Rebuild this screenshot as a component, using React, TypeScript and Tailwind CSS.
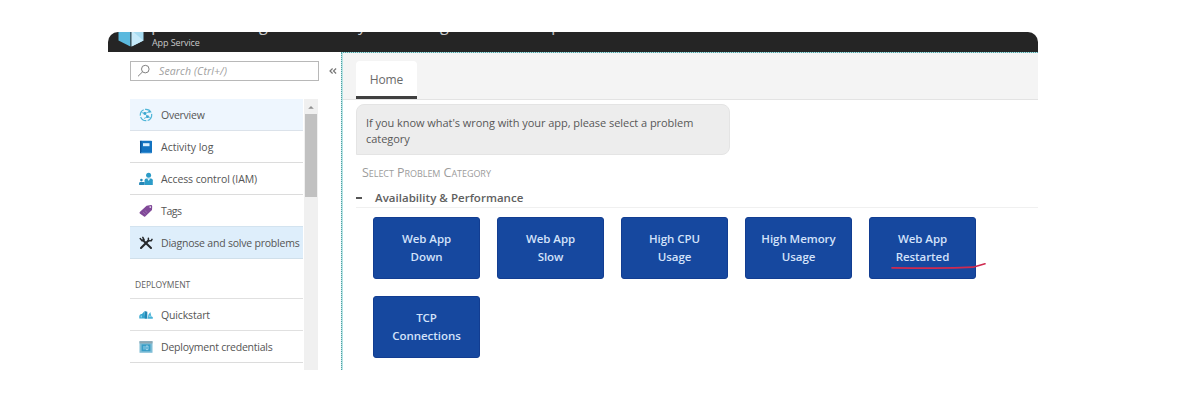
import React from "react";

type NavItem = {
  label: string;
  icon: React.ReactNode;
  row: string;
  text: string;
};

const OverviewIcon = () => (
  <svg width="14" height="14" viewBox="0 0 14 14" fill="none">
    <circle cx="7" cy="7" r="5.7" stroke="#4fb6d8" strokeWidth="1.2" strokeDasharray="7 1.4" />
    <path d="M2.5 4.5 6 5.5 8.4 8.8 11.5 9.5M6 5.5 10 3.8M8.4 8.8 5 10.5" stroke="#58b9d8" strokeWidth="0.9" />
    <circle cx="5.8" cy="5.5" r="1.4" fill="#3aa5cf" />
    <circle cx="8.5" cy="8.7" r="1.4" fill="#3aa5cf" />
    <circle cx="10.2" cy="3.8" r="0.9" fill="#3aa5cf" />
  </svg>
);

const LogIcon = () => (
  <svg width="14" height="14" viewBox="0 0 14 14">
    <rect x="1" y="0.8" width="12" height="12.4" rx="0.8" fill="#1272c0" />
    <rect x="1" y="0.8" width="1.4" height="12.4" fill="#0a5499" />
    <rect x="4" y="3.2" width="6.5" height="3" fill="#d9efff" />
    <rect x="2" y="12" width="10.6" height="0.8" fill="#3d91d3" />
  </svg>
);

const AccessIcon = () => (
  <svg width="14" height="14" viewBox="0 0 14 14">
    <circle cx="9.6" cy="3.2" r="2.5" fill="#2c9cc8" />
    <path d="M5.6 13V8.2Q5.6 6.4 7.2 6.4H12Q13.8 6.4 13.8 8.2V13Z" fill="#2c9cc8" />
    <path d="M8.2 6.4h3L9.7 9Z" fill="#e2f6ff" />
    <circle cx="2.4" cy="8.1" r="1.3" fill="#2788b8" />
    <path d="M0.1 13v-1.7q0-1.3 1.3-1.3H5.6V13Z" fill="#2788b8" />
  </svg>
);

const TagIcon = () => (
  <svg width="14" height="14" viewBox="0 0 14 14">
    <path d="M0.8 8 L7.6 1.8 L12 1 Q13.2 1 13.2 2.2 L13 6 L6.2 12.6 Q5.6 13.1 5 12.6 L0.8 9.4 Q0.2 8.7 0.8 8Z" fill="#804998" />
    <circle cx="11.2" cy="3.1" r="0.8" fill="#fff" />
    <path d="M4 8.2 6.6 10.4M5.8 6.5 8.3 8.8" stroke="#a577b7" strokeWidth="0.7" />
  </svg>
);

const ToolsIcon = () => (
  <svg width="14" height="14" viewBox="0 0 14 14" fill="none" stroke="#26292c" strokeLinecap="round">
    <path d="M4 4.3 12 12" strokeWidth="2.1" />
    <path d="M9.3 4.8 2 12" strokeWidth="2.1" />
    <path d="M1.2 2.5 3.1 4.7 5 3.6 3.8 1.3" strokeWidth="1.5" />
    <path d="M9.4 2.2 9.4 4.8 12.2 4.8 13 3.3" strokeWidth="1.5" />
  </svg>
);

const QuickstartIcon = () => (
  <svg width="14" height="14" viewBox="0 0 14 14">
    <path d="M0.3 10.6V8Q.6 5.8 3 6L5.4 3.2 6.2 10.6Z" fill="#35a6cf" />
    <path d="M5.6 3 8.3 3.8V10.8H5.8Z" fill="#2287b5" />
    <path d="M8.6 10.8 9.4 6.8 11.3 4 12.4 8.4 13.8 9V10.8Z" fill="#48b3d8" />
    <path d="M2.2 7.5v2M9.8 8.2h2" stroke="#cdefff" strokeWidth="0.8" />
  </svg>
);

const CredentialsIcon = () => (
  <svg width="14" height="14" viewBox="0 0 14 14">
    <rect x="0.5" y="1.2" width="13" height="11.6" fill="#7fbdd6" />
    <rect x="0.5" y="1.2" width="13" height="2.2" fill="#8fa7b2" />
    <rect x="2.6" y="4.4" width="8.8" height="6.8" fill="#399dc6" />
    <path d="M5 6v3.6M7 6v3.6h2V6H7" stroke="#c5e8f8" fill="none" strokeWidth="0.7" />
  </svg>
);

const mainItems: NavItem[] = [
  { label: "Overview", icon: <OverviewIcon />, row: "bg-[#eef6fe] border-[#dbe2ea]", text: "tracking-[-0.25px]" },
  { label: "Activity log", icon: <LogIcon />, row: "border-[#dcdcdc]", text: "tracking-[0px]" },
  { label: "Access control (IAM)", icon: <AccessIcon />, row: "border-[#dcdcdc]", text: "tracking-[-0.1px]" },
  { label: "Tags", icon: <TagIcon />, row: "border-[#d3e3ef]", text: "tracking-[-0.4px]" },
  { label: "Diagnose and solve problems", icon: <ToolsIcon />, row: "bg-[#deeefb] border-[#d0dfea]", text: "tracking-[-0.21px]" },
];

const deploymentItems: NavItem[] = [
  { label: "Quickstart", icon: <QuickstartIcon />, row: "border-[#e0e0e0]", text: "tracking-[-0.15px]" },
  { label: "Deployment credentials", icon: <CredentialsIcon />, row: "border-[#dcdcdc]", text: "tracking-[-0.23px]" },
];

const NavRow = ({ item }: { item: NavItem }) => (
  <div className={`flex h-8 shrink-0 items-center border-b pl-[9px] pt-[2px] ${item.row}`}>
    <span className="w-[22px] shrink-0 pb-px">{item.icon}</span>
    <span className={`whitespace-nowrap text-[10.5px] text-[#555] ${item.text}`}>{item.label}</span>
  </div>
);

const categories: [string, string][] = [
  ["Web App", "Down"],
  ["Web App", "Slow"],
  ["High CPU", "Usage"],
  ["High Memory", "Usage"],
  ["Web App", "Restarted"],
  ["TCP", "Connections"],
];

const Header = () => (
  <header className="relative h-5 shrink-0 overflow-hidden bg-[#252525]">
    <svg className="absolute left-[10px] top-[-11px]" width="26" height="26" viewBox="0 0 26 26">
      <path d="M0 5 13 0 26 5 13 10Z" fill="#a8dcf1" />
      <path d="M0.5 5 12.4 9.5V25.5L0.5 19.5Z" fill="#5bb9de" />
      <path d="M13.6 9.5 25.5 5V19.5L13.6 25.5Z" fill="#a8dcf1" />
      <path d="M13.6 9.5 25.5 19.5 13.6 25.5Z" fill="#c6eafa" />
    </svg>
    <span className="absolute left-[43px] top-[-20px] text-[18px] leading-6 text-[#bbb]">p</span>
    <span className="absolute left-[151px] top-[-19px] text-[16px] leading-6 text-[#ccc]">g</span>
    <span className="absolute left-[250px] top-[-19px] text-[16px] leading-6 text-[#ccc]">y</span>
    <span className="absolute left-[332px] top-[-19px] text-[16px] leading-6 text-[#ccc]">g</span>
    <span className="absolute left-[443px] top-[-20px] text-[18px] leading-6 text-[#bbb]">p</span>
    <div className="pl-11 pt-[5px] text-[9px] leading-3 tracking-[-0.1px] text-[#c8c8c8]">App Service</div>
  </header>
);

const Sidebar = () => (
  <aside className="flex w-[233px] shrink-0 flex-col pl-[22px] pt-[9px]">
    <div className="flex h-5 shrink-0 items-center">
      <div className="flex h-5 w-[189px] items-center border border-[#b8b8b8] pl-1.5">
        <svg width="14" height="14" viewBox="0 0 14 14" fill="none" stroke="#808080" strokeWidth="1">
          <circle cx="8.3" cy="5.1" r="3.8" />
          <path d="M5.6 7.8 1 12.3" />
        </svg>
        <span className="pl-[8px] pt-[2px] text-[10.5px] italic tracking-[0.12px] text-[#a0a0a0]">Search (Ctrl+/)</span>
      </div>
      <svg className="ml-[10px]" width="8" height="8" viewBox="0 0 8 8" fill="none" stroke="#777" strokeWidth="1.2">
        <path d="M3.6 1.5 1 4l2.6 2.5M7.1 1.5 4.5 4l2.6 2.5" />
      </svg>
    </div>
    <div className="mt-[18px] flex min-h-0 flex-1">
      <nav className="flex w-[173px] flex-col">
        {mainItems.map((item) => (
          <NavRow key={item.label} item={item} />
        ))}
        <div className="flex h-10 shrink-0 items-center border-b border-[#e0e0e0] pl-[5px] pt-[13px] text-[8.5px] tracking-[0px] text-[#606060]">
          DEPLOYMENT
        </div>
        {deploymentItems.map((item) => (
          <NavRow key={item.label} item={item} />
        ))}
      </nav>
      <div className="ml-px flex w-[14px] flex-col items-center bg-[#f0f0f0]">
        <svg className="my-[3px] shrink-0" width="8" height="9" viewBox="0 0 8 9">
          <path d="M1.2 6.8 4 4 6.8 6.8Z" fill="#909090" />
        </svg>
        <div className="h-[83px] w-[12px] shrink-0 bg-[#c1c1c1]" />
      </div>
    </div>
  </aside>
);

const Content = () => (
  <main className="flex min-w-0 flex-1 border-l border-t border-dotted border-[#4fa0a3] bg-[#b9e3e4] pl-px">
    <div className="flex min-w-0 flex-1 flex-col bg-white">
      <div className="flex h-[47px] shrink-0 items-end border-b border-[#e3e3e3] bg-[#f4f4f4] pl-[13px]">
        <div className="flex h-[38px] w-[61px] items-center justify-center rounded-t border-b-[3px] border-[#404040] bg-white pt-[3px] text-[12px] tracking-[-0.1px] text-[#6a6a6a]">
          Home
        </div>
      </div>
      <div className="ml-[13px] mt-1 h-[51px] w-[374px] shrink-0 rounded-lg rounded-bl-none border border-[#e4e4e4] bg-[#ededed] pl-[9px] pt-[10px] text-[11px] leading-4 tracking-[-0.05px] text-[#585858]">
        If you know what's wrong with your app, please select a problem
        <br />
        category
      </div>
      <div className="ml-[19px] mt-[10px] h-4 shrink-0 whitespace-nowrap text-[12.5px] leading-4 tracking-[-0.05px] text-[#9c9c9c] [font-variant:small-caps]">
        Select Problem Category
      </div>
      <div className="ml-[13px] mt-[8px] flex h-[19px] shrink-0 items-center border-b border-[#f0f0f0] pb-[1px]">
        <span className="h-[2px] w-[6px] bg-[#555]" />
        <span className="pl-[13px] text-[11.5px] font-semibold tracking-[0.03px] text-[#606060]">Availability &amp; Performance</span>
      </div>
      <div className="ml-[30px] mt-[9px] grid w-fit grid-cols-5 gap-x-[17px] gap-y-[17px]">
        {categories.map(([first, second]) => (
          <div
            key={first + second}
            className="relative flex h-[62px] w-[107px] flex-col items-center justify-center rounded-[3px] border border-[#123d91] bg-[#16489f] text-[11.5px] font-semibold leading-[18px] tracking-[-0.05px] text-[#d3e2fa]"
          >
            <span>{first}</span>
            <span>{second}</span>
            {second === "Restarted" && (
              <svg className="absolute left-[21px] top-[42px]" width="98" height="12" viewBox="0 0 98 12" fill="none">
                <path d="M1 7.8Q22 8.2 43 8.2T82 7.2L94 3.8" stroke="#cf2a50" strokeWidth="1.7" strokeLinecap="round" />
              </svg>
            )}
          </div>
        ))}
      </div>
    </div>
  </main>
);

export default function App() {
  return (
    <div className="h-[412px] w-[1178px] overflow-hidden bg-white pl-[108px] pt-8 font-['Open_Sans','Noto_Sans',sans-serif]">
      <div className="flex h-[338px] w-[930px] flex-col overflow-hidden rounded-t-[10px] bg-white">
        <Header />
        <div className="flex min-h-0 flex-1">
          <Sidebar />
          <Content />
        </div>
      </div>
    </div>
  );
}
